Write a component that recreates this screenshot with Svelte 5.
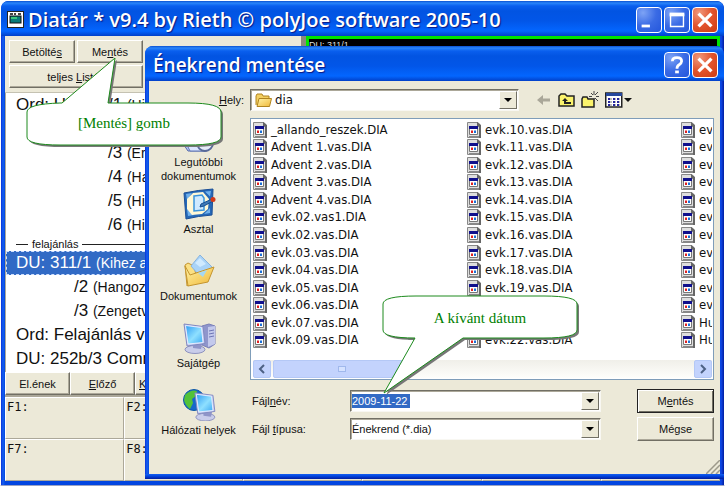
<script>
  const hymns = [
    { ref: 'Ord: Hitvall', verse: '/1', hint: '(His', level: 0 },
    { ref: '', level: 2 },
    { ref: '/3', hint: '(Ért', level: 2 },
    { ref: '/4', hint: '(Har', level: 2 },
    { ref: '/5', hint: '(Hisz', level: 2 },
    { ref: '/6', hint: '(Hisz', level: 2 },
    { divider: 'felajánlás' },
    { ref: 'DU: 311/1', hint: '(Kihez az', level: 0, selected: true },
    { ref: '/2', hint: '(Hangozz', level: 1 },
    { ref: '/3', hint: '(Zengetv', level: 1 },
    { ref: 'Ord: Felajánlás vé', level: 0 },
    { ref: 'DU: 252b/3 Comm', level: 0 }
  ];
  const weeks = (list) => list.map((n) => `evk.${n}.vas.DIA`);
  const files = [
    '_allando_reszek.DIA',
    'Advent 1.vas.DIA',
    'Advent 2.vas.DIA',
    'Advent 3.vas.DIA',
    'Advent 4.vas.DIA',
    'evk.02.vas1.DIA',
    ...weeks(['02', '03', '04', '05', '06', '07', '09']),
    ...weeks([10, 11, 12, 13, 14, 15, 16, 17, 18, 19, 20, 21, 22]),
    ...Array(11).fill('ev'),
    'Hu',
    'Hu'
  ];
  const places = [
    { id: 'recent', label: 'Legutóbbi dokumentumok' },
    { id: 'desktop', label: 'Asztal' },
    { id: 'docs', label: 'Dokumentumok' },
    { id: 'computer', label: 'Sajátgép' },
    { id: 'network', label: 'Hálózati helyek' }
  ];
  const keys = Array.from({ length: 12 }, (_, i) => `F${i + 1}:`);
  let fileName = $state('2009-11-22');
</script>

{#snippet cross()}
  <svg viewBox="0 0 26 26" width="24" height="24" aria-hidden="true"><path d="M6 6l14 14M20 6L6 20" stroke="#fff" stroke-width="3.500" fill="none" /></svg>
{/snippet}

{#snippet monitor()}
  <ellipse cx="13" cy="27.500" rx="10" ry="4" fill="#c9cdea" stroke="#8e93bf" />
  <path d="M11 20l9 2-1 5-8-1z" fill="#8f95c8" />
  <path d="M2 2l19 2.500 2 17L5 24z" fill="#c3caee" stroke="#8289c0" />
  <path d="M3.500 3.500l16 2 1.500 15L6 22z" fill="url(#screen)" stroke="#e6ecff" />
{/snippet}

<svg class="defs" aria-hidden="true">
  <defs>
    <linearGradient id="screen" x1="0" y1="0" x2="1" y2="1"><stop offset="0" stop-color="#2f9cf3" /><stop offset=".55" stop-color="#8fe0ff" /><stop offset="1" stop-color="#3aa8f2" /></linearGradient>
    <linearGradient id="folder" x1="0" y1="0" x2="1" y2="1"><stop offset="0" stop-color="#fff3a8" /><stop offset="1" stop-color="#f0b838" /></linearGradient>
  </defs>
</svg>

<main class="window app">
  <header class="title">
    <svg class="logo" viewBox="0 0 17 17" width="17" height="17" aria-hidden="true">
      <rect x=".5" y=".5" width="16" height="16" fill="#fff" stroke="#222" />
      <path d="M3 2h3v2H3zM7 2h2v2H7zM11 2h3v2h-3z" fill="#444" />
      <rect x="3" y="5" width="11" height="7" fill="#087b78" stroke="#111" />
      <path d="M4 6h6v2H4z" fill="#39c67c" />
    </svg>
    <h1>Diatár * v9.4 by Rieth © polyJoe software 2005-10</h1>
    <button class="cap" aria-label="Kis méret"><svg viewBox="0 0 26 26" width="24" height="24"><path d="M5 18h9v3H5z" fill="#fff" /></svg></button>
    <button class="cap" aria-label="Teljes méret"><svg viewBox="0 0 26 26" width="24" height="24"><path d="M6 7h14v13H6z" fill="none" stroke="#fff" stroke-width="1.500" /><path d="M5 5h16v4H5z" fill="#fff" /></svg></button>
    <button class="cap close" aria-label="Bezárás">{@render cross()}</button>
  </header>
  <div class="client">
    <div class="upper">
      <section class="left">
        <div class="toolbar">
          <button class="btn">Betölté<u>s</u></button>
          <button class="btn">Me<u>n</u>tés</button>
          <button class="btn wide">teljes <u>L</u>isták</button>
        </div>
        <ul class="hymns">
          {#each hymns as h}
            {#if h.divider}
              <li class="divider"><span>{h.divider}</span></li>
            {:else}
              <li class="hymn level{h.level}" class:selected={h.selected}>
                {#if h.verse}<span class="stem">{h.ref}</span>{h.verse}{:else}{h.ref}{/if}
                {#if h.hint}<small>{h.hint}</small>{/if}
              </li>
            {/if}
          {/each}
        </ul>
        <div class="nav">
          <button class="btn">El.ének</button>
          <button class="btn"><u>E</u>lőző</button>
          <button class="btn key"><u>K</u></button>
        </div>
      </section>
      <section class="projection">DU: 311/1</section>
    </div>
    <div class="keys">
      {#each keys as k}<div>{k}</div>{/each}
    </div>
  </div>
</main>

<section class="window dialog" role="dialog" aria-labelledby="dialog-title">
  <header class="title">
    <h2 id="dialog-title">Énekrend mentése</h2>
    <button class="cap" aria-label="Súgó"><svg viewBox="0 0 26 26" width="24" height="24"><path d="M8 9q0-4 5-4t5 4q0 2-3 4-2 1-2 4" fill="none" stroke="#fff" stroke-width="3" /><path d="M11 19h4v3h-4z" fill="#fff" /></svg></button>
    <button class="cap close" aria-label="Bezárás">{@render cross()}</button>
  </header>
  <div class="body">
    <div class="lookin">
      <label for="folder-select"><u>H</u>ely:</label>
      <div class="combo">
        <svg viewBox="0 0 17 15" width="17" height="15" aria-hidden="true"><path d="M1 12V3l1-2h5l1 2h6v3" fill="#f3cf61" stroke="#b08420" /><path d="M2 13.500L4 5.500h12.500L14.500 13.500z" fill="url(#folder)" stroke="#b08420" /></svg>
        <select id="folder-select" class="tahoma"><option>dia</option></select>
        <i class="drop"></i>
      </div>
      <div class="tools">
        <button aria-label="Vissza"><svg viewBox="0 0 16 16" width="16" height="16"><path d="M1 8l6-5v3.500h7v3H7V13z" fill="#aaa799" /></svg></button>
        <button aria-label="Egy szinttel feljebb"><svg viewBox="0 0 17 16" width="17" height="16"><path d="M1 14V4l2-2h4l2 2h7v10z" fill="#fbf36c" stroke="#222" stroke-width="1.500" /><path d="M4 9l3-3 3 3H8v1h5v2H6V9z" fill="#222" /></svg></button>
        <button aria-label="Új mappa"><svg viewBox="0 0 18 18" width="18" height="18"><path d="M1 16V8l1-2h4l1 2h6v8z" fill="#fbf36c" stroke="#222" stroke-width="1.500" /><path d="M13 0v4M13 7v4M8 5.500h3M15 5.500h3M10 2l2 2M17 1l-3 3M17 10l-3-3" stroke="#444" fill="none" /></svg></button>
        <button aria-label="Nézet"><svg viewBox="0 0 27 16" width="27" height="16"><rect x=".75" y="1" width="16" height="14" fill="#fff" stroke="#222" stroke-width="1.500" /><path d="M1 1h16v3H1z" fill="#25479c" /><path d="M3 6h2v2H3zM8 6h2v2H8zM12 6h2v2h-2zM3 9h2v2H3zM8 9h2v2H8zM12 9h2v2h-2zM3 12h2v2H3zM8 12h2v2H8zM12 12h2v2h-2z" fill="#25259c" /><path d="M5 7h2M10 7h1M14 7h1M5 10h2M10 10h1M14 10h1M5 13h2M10 13h1M14 13h1" stroke="#777" /><path d="M19 6h8l-4 4z" fill="#111" /></svg></button>
      </div>
    </div>
    <div class="main">
      <nav class="places">
        {#each places as p}
          <button>
            <svg viewBox="0 0 34 32" width="34" height="32" aria-hidden="true">
              {#if p.id === 'recent'}
                <path d="M2 8l14-5 14 5v18l-5 4H6l-4-6z" fill="#b8c7f4" stroke="#5267a9" />
                <path d="M3 20l5 10h15V18z" fill="#dce6ff" stroke="#6078b8" />
                <circle cx="23" cy="22" r="8" fill="#e6ecf8" stroke="#596a98" stroke-width="2" />
                <path d="M23 17v5l4 2" fill="none" stroke="#333" />
              {:else if p.id === 'desktop'}
                <path d="M2 5q14-3 29-4l-1 26Q16 28 4 31z" fill="#2468b8" stroke="#1b4f96" />
                <path d="M4 6l6-1-5 7zM29 3l-6 .5 5 5zM6 28l6-1-7-6zM28 25l-6 1 6-6z" fill="#6fb0ec" />
                <path d="M11 5l10-1 6 7-1 10-6 5-10 1-5-6V11z" fill="#fff8d6" />
                <path d="M12 8l8-1 2 3v12l-10 1z" fill="#cfeaff" stroke="#3a94dc" stroke-width="1.500" />
                <path d="M19 16l11-5 1 2-9 5-4 1z" fill="#3d79b7" stroke="#174d91" />
                <circle cx="31" cy="11.500" r="2.500" fill="#d43a18" />
              {:else if p.id === 'docs'}
                <path d="M3 10l3-2 6 3 3 14-10 6z" fill="#fbe084" stroke="#c49530" />
                <path d="M18 0l12 12-9 13-12-14z" fill="#a9d3f8" stroke="#88b4de" />
                <path d="M18 3l6 6-6 3-5-4z" fill="#cfeaff" />
                <path d="M3 11l5 9 24-8-6 15-20 4z" fill="url(#folder)" stroke="#c49530" />
                <path d="M16 18l9-3-4 7z" fill="#a5d8f3" />
              {:else if p.id === 'computer'}
                <path d="M20 4l7-2 6 2v18l-6 4-7-3z" fill="#8f96cc" stroke="#7a80b8" />
                <path d="M26 5l7-1v18l-7 3z" fill="#c3c9ec" />
                <path d="M27 9l5-1M27 12l5-1M27 15l5-1" stroke="#6d75b5" />
                {@render monitor()}
              {:else}
                <circle cx="12" cy="11" r="10.500" fill="#1768c9" stroke="#0d58a6" />
                <path d="M3 6q6-6 12-4l-1 5-4 3 1 4-3 6q-5-4-6-9z" fill="#53c238" />
                <g transform="translate(11 2) scale(.95)">{@render monitor()}</g>
              {/if}
            </svg>
            <span>{p.label}</span>
          </button>
        {/each}
      </nav>
      <div class="right">
        <div class="filebox">
          <ul class="files tahoma">
            {#each files as f}
              <li>
                <svg viewBox="0 0 14 16" width="14" height="16" aria-hidden="true"><path d="M.5.5H11L13 3v12.500H.5z" fill="#dedede" stroke="#888" /><path d="M10 0l4 3v13h-2V5l-2-1z" fill="#666" /><path d="M2 14.500h10" stroke="#888" /><path d="M2.500 4.500h8v8h-8z" fill="#fff" stroke="#777" /><path d="M2 4h9v3H2z" fill="#10108c" /><path d="M4 8.500h2v2.500H4z" fill="#e02020" /><path d="M7 8.500h2v2.500H7z" fill="#1b70d8" /></svg>
                <span>{f}</span>
              </li>
            {/each}
          </ul>
          <div class="scroll">
            <button aria-label="Balra"><svg viewBox="0 0 16 16" width="16" height="16"><path d="M10 4L6 8l4 4" /></svg></button>
            <div class="track"><div class="thumb"><i></i></div></div>
            <button aria-label="Jobbra"><svg viewBox="0 0 16 16" width="16" height="16"><path d="M6 4l4 4-4 4" /></svg></button>
          </div>
        </div>
        <div class="fields">
          <label for="file-name">Fájl<u>n</u>év:</label>
          <div class="combo">
            <input id="file-name" bind:value={fileName} />
            <i class="drop"></i>
          </div>
          <button class="btn default">M<u>e</u>ntés</button>
          <label for="file-type">Fájl <u>t</u>ípusa:</label>
          <div class="combo">
            <select id="file-type"><option>Énekrend (*.dia)</option></select>
            <i class="drop"></i>
          </div>
          <button class="btn">Mégse</button>
        </div>
      </div>
    </div>
    <svg class="grip" viewBox="0 0 14 14" width="14" height="14" aria-hidden="true"><path d="M0 14L14 0M5 14l9-9M10 14l4-4" stroke="#9d9a8b" stroke-width="1.500" /></svg>
  </div>
</section>

<aside class="callout first">
  <svg viewBox="0 0 198 92" width="198" height="92" aria-hidden="true">
    <path class="shade" d="M36 46H34Q1 47 1 55V80Q1 88 34 88H162Q195 88 195 80V55Q195 46 162 46H82L89 1z" />
    <path class="shape" d="M36 46H34Q1 47 1 55V80Q1 88 34 88H162Q195 88 195 80V55Q195 46 162 46H82L89 1z" />
  </svg>
  <p>[Mentés] gomb</p>
</aside>
<aside class="callout second">
  <svg viewBox="0 0 198 102" width="198" height="102" aria-hidden="true">
    <path class="shade" d="M33 43Q1 43 1 35V9Q1 1 34 1H162Q195 1 195 9V35Q195 43 162 43H81L2 98z" />
    <path class="shape" d="M33 43Q1 43 1 35V9Q1 1 34 1H162Q195 1 195 9V35Q195 43 162 43H81L2 98z" />
  </svg>
  <p>A kívánt dátum</p>
</aside>

<style>
  :global(body) { background: #fff; }
  :global(#app) { position: relative; overflow: hidden; min-height: 100vh; }
  * { box-sizing: border-box; }
  ul, h1, h2, p { margin: 0; padding: 0; list-style: none; }
  button, input, select { font: inherit; color: inherit; margin: 0; padding: 0; }
  svg { display: block; flex: none; }
  .defs { position: absolute; width: 0; height: 0; }
  .window {
    display: flex; flex-direction: column;
    font: 11px/14px "Liberation Sans", Arial, sans-serif;
    color: #111;
    background: linear-gradient(90deg, #0831d9, #1560f0 2px, #0246e0 4px, #0246e0 calc(100% - 4px), #1048e8 calc(100% - 3px), #001da0);
    border-radius: 8px 8px 0 0;
  }
  .app { min-height: 100vh; border: 1px solid #fff; padding: 0 4px 4px; border-bottom-color: #9aa3c4; }
  .title {
    display: flex; align-items: center; gap: 2px; height: 35px; flex: none;
    margin: 0 -4px; padding: 2px 6px 0;
    border-radius: 8px 8px 0 0;
    background: linear-gradient(#0a50d0, #2a86fa 2px, #0a5fee 5px, #0254e2 10px, #0256e8 20px, #0366ff 30px, #0240c8);
  }
  h1, h2 {
    flex: 1; white-space: nowrap; overflow: hidden; color: #fff;
    font: 600 20px/32px "Open Sans", "Noto Sans", sans-serif; text-shadow: 1px 1px 1px #0a1883;
  }
  h2 { font-size: 19px; }
  .logo { margin-right: 2px; }
  .cap {
    width: 26px; height: 26px; flex: none; border: 1px solid #fff; border-radius: 4px;
    background: radial-gradient(circle at 25% 20%, #7da3f5, #3a6be5 50%, #2456dc);
  }
  .close { background: radial-gradient(circle at 25% 20%, #f0987c, #e2532c 50%, #cd3c12); }
  .client { flex: 1; display: flex; flex-direction: column; background: #ece9d8; }
  .upper { display: flex; flex: 1; }
  .left { width: 301px; flex: none; display: flex; flex-direction: column; border-right: 5px solid #8b887d; }
  .projection { flex: 1; background: #000; border: 3px solid #00e400; color: #ddd; font-size: 9px; line-height: 12px; }
  .toolbar { display: grid; grid-template-columns: 66px 66px; gap: 2px; padding: 4px; border-bottom: 1px solid #c5c2b2; }
  .btn {
    height: 23px; background: #ece9d8; text-align: center;
    border: 1px solid; border-color: #fff #716f64 #716f64 #fff; box-shadow: inset -1px -1px #aca899;
  }
  .wide { grid-column: span 2; }
  .hymns { flex: 1; background: #fff; border-left: 1px solid #aca899; font-size: 17px; line-height: 24px; white-space: nowrap; overflow: hidden; }
  .hymn { height: 24px; padding-left: 10px; }
  .hymn small { font-size: 14px; }
  .stem { display: inline-block; width: 92px; }
  .level1 { padding-left: 68px; }
  .level2 { padding-left: 102px; }
  .selected { background: #316ac5; color: #fff; outline: 1px dashed #cfe0ff; outline-offset: -1px; }
  .divider { display: flex; align-items: center; gap: 4px; height: 14px; padding-left: 10px; font-size: 11px; line-height: 14px; }
  .divider::before, .divider::after { content: ""; height: 1px; background: #222; width: 12px; }
  .divider::after { flex: 1; }
  .nav { display: grid; grid-template-columns: repeat(3, 65px); border-bottom: 2px solid #aca899; }
  .key { text-align: left; padding-left: 3px; }
  .keys { display: grid; grid-template-columns: repeat(6, 1fr); font: 12px/18px "DejaVu Sans Mono", monospace; }
  .keys div { height: 42px; padding: 0 1px; border: 1px solid; border-color: #fff #aca899 #aca899 #fff; }
  .dialog { position: absolute; left: 145px; right: 1px; top: 46px; padding: 0 4px 5px; }
  .dialog::after {
    content: ""; position: absolute; left: 0; right: 0; bottom: 0; height: 5px;
    background: linear-gradient(#1560f0, #0246e0 2px, #001da0);
  }
  .dialog .title { padding-left: 8px; }
  .body { position: relative; background: #ece9d8; padding: 8px 6px 18px 1px; }
  .lookin { display: flex; align-items: center; }
  .lookin label { width: 94px; text-align: right; margin-right: 6px; }
  .lookin .combo { width: 269px; }
  .combo {
    display: flex; align-items: center; gap: 3px; height: 22px; padding: 1px 1px 1px 4px; background: #fff;
    border: 1px solid; border-color: #716f64 #f8f7f2 #f8f7f2 #716f64; box-shadow: inset 1px 1px #aca899;
  }
  select { appearance: none; border: 0; background: none; flex: 1; min-width: 0; outline: 0; }
  .drop {
    width: 18px; height: 18px; margin-left: auto; background: #ece9d8; pointer-events: none;
    border: 1px solid; border-color: #fff #716f64 #716f64 #fff; display: grid; place-items: center;
  }
  .drop::after { content: ""; border: 4px solid transparent; border-top-color: #000; border-bottom: 0; }
  .tahoma { font: 13px/16px "DejaVu Sans Condensed", "DejaVu Sans", Tahoma, sans-serif; }
  .tools { display: flex; align-items: center; gap: 6px; padding-left: 17px; }
  .tools button, .places button { border: 0; background: none; }
  .main { display: flex; gap: 3px; margin-top: 7px; }
  .places { width: 97px; flex: none; padding-top: 3px; display: grid; grid-auto-rows: 67px; align-content: start; }
  .places button { display: flex; flex-direction: column; align-items: center; gap: 2px; }
  .right { flex: 1; min-width: 0; }
  .filebox { background: #fff; border: 1px solid #7f9db9; padding: 2px 1px 1px 2px; }
  .files { display: grid; grid-auto-flow: column; grid-template-rows: repeat(13, 1fr); grid-auto-columns: 214px; height: 228px; overflow: hidden; }
  .files li { display: flex; align-items: center; gap: 4px; white-space: nowrap; }
  .scroll { display: flex; height: 18px; margin-top: 11px; background: linear-gradient(#f0efe9, #fefefb); }
  .scroll button { width: 18px; border: 1px solid #b4c8f6; border-radius: 2px; background: #c3d3fd; }
  .scroll path { fill: none; stroke: #4d6185; stroke-width: 2; }
  .track { flex: 1; padding: 0 2px; }
  .thumb { width: 33%; height: 18px; border-radius: 2px; border: 1px solid #b4c8f6; background: #c3d3fd; display: grid; place-items: center; }
  .thumb i { width: 8px; height: 6px; border: 1px solid #a0b8ec; background: #d5e2ff; }
  .fields { display: grid; grid-template-columns: 100px 1fr 77px; align-items: center; row-gap: 4px; margin-top: 9px; }
  .fields label { padding-left: 2px; }
  .fields .combo { margin-right: 36px; padding-left: 1px; }
  .fields .btn { height: 24px; }
  .fields .default { border-color: #222; box-shadow: inset 1px 1px #fff, inset -1px -1px #716f64; }
  input { width: 58px; height: 14px; border: 0; outline: 0; background: #316ac5; color: #fff; }
  .grip { position: absolute; right: 0; bottom: 0; }
  .callout { position: absolute; width: 198px; color: #008000; font: 15px/20px "Liberation Serif", "Times New Roman", serif; text-align: center; }
  .callout p { position: absolute; left: 0; right: 2px; }
  .first { left: 26px; top: 57px; }
  .first p { bottom: 16px; }
  .second { left: 382px; top: 295px; }
  .second p { top: 13px; }
  .shape { fill: #fff; stroke: #1c8a1c; stroke-width: 1; }
  .shade { fill: #777; transform: translate(2px, 2px); }
</style>
